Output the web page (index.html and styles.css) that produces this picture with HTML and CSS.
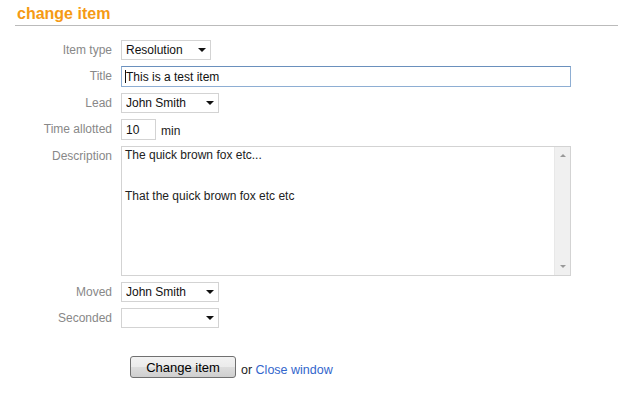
FILE: index.html
```html
<!DOCTYPE html>
<html lang="en">
<head>
  <meta charset="UTF-8" />
  <title>change item</title>
  <link rel="stylesheet" href="styles.css">
</head>
<body>
  <h1 class="page-title">change item</h1>

  <form class="item-form">
    <label class="lbl">Item type</label>
    <div class="ctl">
      <span class="select w90"><select><option>Resolution</option></select></span>
    </div>

    <label class="lbl">Title</label>
    <div class="ctl">
      <span class="focus-wrap"><input class="text title-input" type="text" value="This is a test item"></span>
    </div>

    <label class="lbl">Lead</label>
    <div class="ctl">
      <span class="select w98"><select><option>John Smith</option></select></span>
    </div>

    <label class="lbl">Time allotted</label>
    <div class="ctl">
      <input class="text time-input" type="text" value="10"> <span class="unit">min</span>
    </div>

    <label class="lbl">Description</label>
    <div class="ctl">
      <div class="desc-box">
        <textarea>The quick brown fox etc...


That the quick brown fox etc etc</textarea>
        <div class="scroll">
          <span class="arr up"></span>
          <span class="arr down"></span>
        </div>
      </div>
    </div>

    <label class="lbl">Moved</label>
    <div class="ctl">
      <span class="select w98"><select><option>John Smith</option></select></span>
    </div>

    <label class="lbl">Seconded</label>
    <div class="ctl">
      <span class="select w98"><select><option></option></select></span>
    </div>
  </form>

  <div class="actions">
    <button type="button" class="btn">Change item</button>
    <span class="or">or <a href="#">Close window</a></span>
  </div>
</body>
</html>
```

FILE: styles.css
```css
* { box-sizing: border-box; }
body {
  margin: 0;
  padding: 5px 0 0 15px;
  background: #fff;
  color: #222;
  font-family: "Liberation Sans", Arial, sans-serif;
  font-size: 12px;
}

/* cabecera */
.page-title {
  margin: 0;
  padding: 0 0 2px 2px;
  color: #f59a14;
  font-size: 16px;
  font-weight: bold;
  line-height: 18px;
  border-bottom: 1px solid #bbb;
}

/* formulario */
.item-form {
  display: grid;
  grid-template-columns: 97px 1fr;
  column-gap: 9px;
  row-gap: 6px;
  margin-top: 14px;
}
.lbl {
  color: #888;
  text-align: right;
  line-height: 20px;
}
.ctl {
  display: flex;
  align-items: flex-start;
}

.select {
  position: relative;
  display: inline-block;
  height: 20px;
}
.select select {
  appearance: none;
  -webkit-appearance: none;
  width: 100%;
  height: 20px;
  margin: 0;
  padding: 0 16px 0 4px;
  border: 1px solid #d3d3d3;
  border-radius: 0;
  background: #fff;
  color: #111;
  font: 12px "Liberation Sans", Arial, sans-serif;
}
.select::after {
  content: "";
  position: absolute;
  right: 5px;
  top: 8px;
  border-left: 4px solid transparent;
  border-right: 4px solid transparent;
  border-top: 4px solid #111;
  pointer-events: none;
}
.w90 { width: 90px; }
.w98 { width: 98px; }

.text {
  height: 21px;
  margin: 0;
  padding: 0 4px;
  border: 1px solid #d3d3d3;
  color: #111;
  font: 12px "Liberation Sans", Arial, sans-serif;
  outline: none;
}
.focus-wrap {
  position: relative;
  display: inline-block;
}
/* cursor de texto */
.focus-wrap::before {
  content: "";
  position: absolute;
  left: 4px;
  top: 4px;
  width: 1px;
  height: 13px;
  background: #111;
}
.title-input {
  width: 450px;
  border-color: #8eaed3;
  border-top-color: #6a90bd;
}
.time-input { width: 35px; }
.unit {
  margin-left: 5px;
  padding-top: 5px;
  color: #222;
}

.desc-box {
  display: flex;
  width: 450px;
  height: 130px;
  border: 1px solid #d3d3d3;
}
.desc-box textarea {
  flex: 1;
  border: none;
  resize: none;
  padding: 2px 3px;
  color: #222;
  font: 12px/13.8px "Liberation Sans", Arial, sans-serif;
  outline: none;
  overflow: hidden;
}
.scroll {
  width: 16px;
  background: #f0f0f0;
  border-left: 1px solid #e8e8e8;
  display: flex;
  flex-direction: column;
  justify-content: space-between;
  align-items: center;
  padding: 7px 0;
}
.arr {
  width: 0;
  height: 0;
  border-left: 3px solid transparent;
  border-right: 3px solid transparent;
}
.arr.up { border-bottom: 3px solid #999; }
.arr.down { border-top: 3px solid #999; }

/* botones */
.actions {
  margin: 28px 0 0 115px;
  display: flex;
  align-items: flex-end;
  gap: 5px;
}
.btn {
  width: 106px;
  height: 22px;
  padding: 0;
  border: 1px solid #707070;
  border-radius: 3px;
  background: linear-gradient(#f2f2f2, #ebebeb 50%, #dddddd 50%, #cfcfcf);
  color: #000;
  font: 13px "Liberation Sans", Arial, sans-serif;
}
.or {
  color: #222;
  font-size: 12.5px;
  padding-bottom: 1px;
}
.or a {
  color: #3366cc;
  text-decoration: none;
}
```
